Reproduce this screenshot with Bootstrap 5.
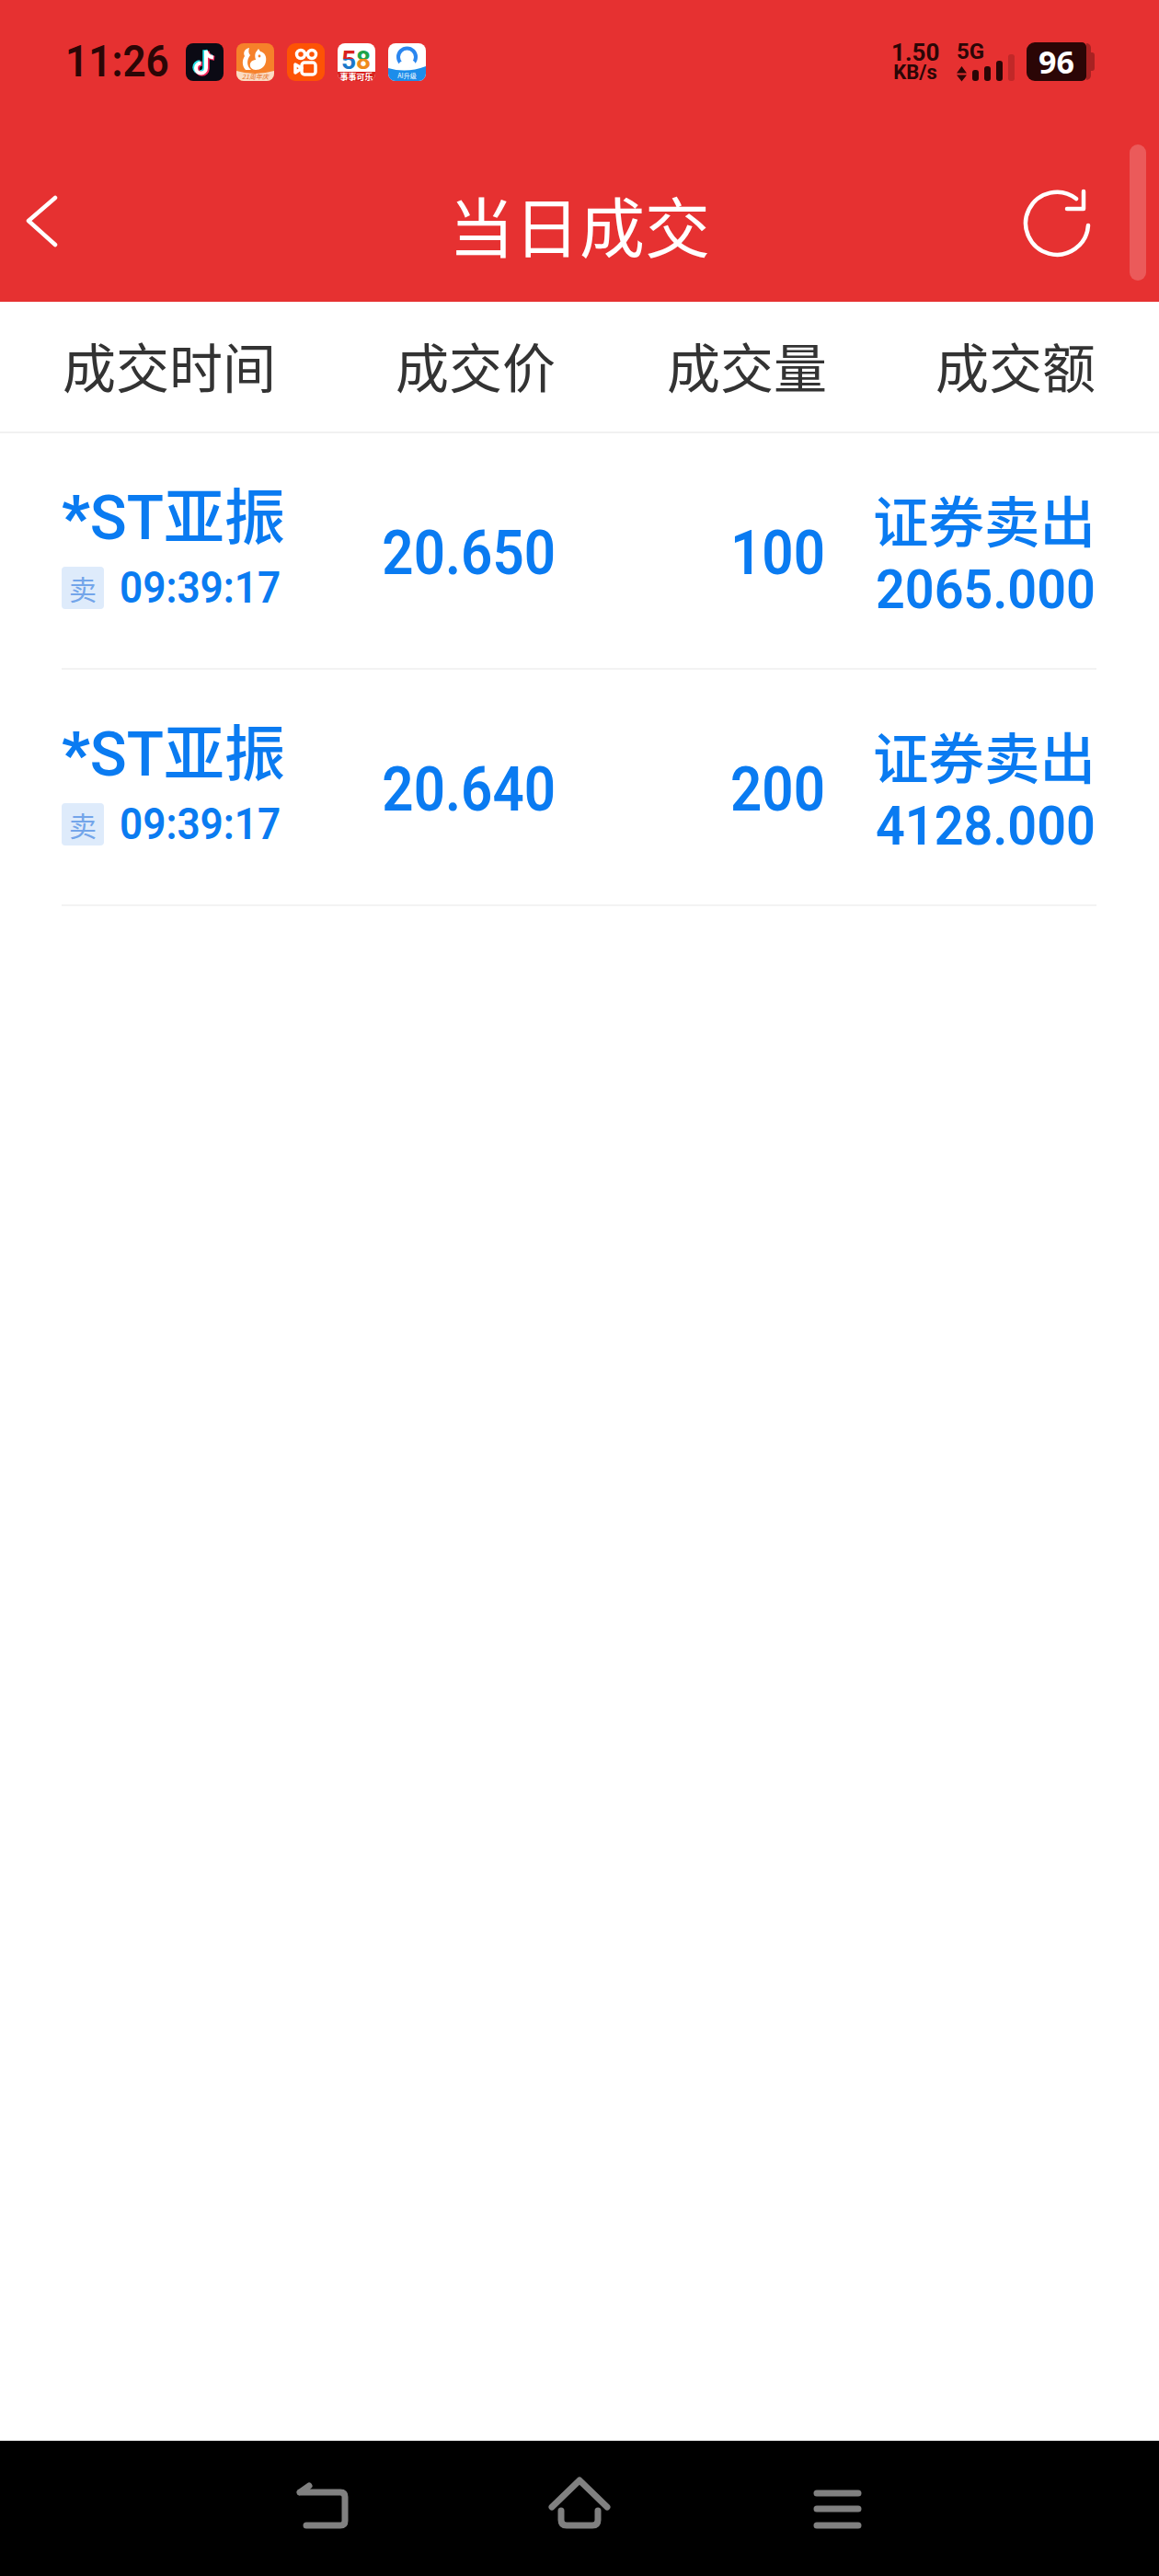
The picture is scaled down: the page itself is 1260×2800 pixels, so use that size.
<!DOCTYPE html>
<html lang="zh-CN">
<head>
    <meta charset="UTF-8">
    <meta name="viewport" content="width=device-width, initial-scale=1.0">
    <title>当日成交</title>
    <link href="https://cdn.jsdelivr.net/npm/bootstrap@5.3.0/dist/css/bootstrap.min.css" rel="stylesheet">
    <style>
        body {
            background: #fff;
            font-family: "Noto Sans CJK SC", "Noto Sans", sans-serif;
        }
        .app-page {
            min-height: 2800px;
            overflow: hidden;
        }
        .top-bar {
            height: 328px;
            background: #e63131;
            padding-top: 46px;
        }
        .status-row {
            height: 42px;
            padding: 0 70px 0 71px;
            color: #2b0606;
        }
        .clock {
            width: 131px;
            font: 600 49px/42px Roboto, sans-serif;
            transform: scaleX(.9);
            transform-origin: left center;
        }
        .app-icons {
            gap: 14px;
        }
        .net-speed {
            width: 52px;
            font-family: Roboto, sans-serif;
            font-weight: 700;
            text-align: center;
        }
        .speed-value {
            font-size: 26px;
            line-height: 24px;
        }
        .speed-unit {
            font-size: 22px;
            line-height: 20px;
        }
        .net-type {
            width: 76px;
            margin-left: 19px;
        }
        .net-type-label {
            font: 700 24px/20px Roboto, sans-serif;
        }
        .signal-icon {
            overflow: visible;
        }
        .battery {
            width: 65px;
            height: 42px;
            background: #2b0606;
            border-radius: 9px 5px 5px 9px;
            color: #fff;
            font: 700 34px/42px "Open Sans", sans-serif;
            text-align: center;
        }
        .battery-edge {
            width: 5px;
            height: 40px;
            background: #a82222;
            border-radius: 0 6px 6px 0;
        }
        .battery-nub {
            width: 4px;
            height: 20px;
            background: #a82222;
            border-radius: 0 3px 3px 0;
        }
        .title-row {
            height: 170px;
            margin-top: 70px;
            padding: 0 74px 0 29px;
            color: #fff;
        }
        .title-left {
            width: 195px;
        }
        .title-right {
            width: 150px;
        }
        .title-left svg {
            overflow: visible;
        }
        .page-title {
            font-size: 71px;
            line-height: 90px;
            font-weight: 400;
            margin: 0;
        }
        .scroll-thumb {
            position: absolute;
            left: 1228px;
            top: 157px;
            width: 18px;
            height: 148px;
            background: rgba(255, 255, 255, .2);
            border-radius: 9px;
        }
        .head-row {
            height: 143px;
            padding: 0 69px 3px 68px;
            border-bottom: 2px solid #f1f1f1;
            color: #333;
            font-size: 58px;
            line-height: 80px;
        }
        .col-name { width: 272px; }
        .col-price { width: 264px; }
        .col-qty { width: 295px; }
        .col-amount { width: 292px; }
        .deal-row {
            height: 257px;
            margin: 0 68px 0 67px;
            border-bottom: 2px solid #f3f3f3;
            color: #0a7bf1;
        }
        .deal-row .col-price { width: 265px; }
        .deal-row .col-qty { width: 293px; }
        .deal-row .col-amount { width: 294px; }
        .name-stack {
            padding-bottom: 8px;
        }
        .stock-name {
            font-family: Roboto, "Noto Sans CJK SC", sans-serif;
            font-size: 66px;
            line-height: 72px;
            font-weight: 500;
            white-space: nowrap;
        }
        .stock-star {
            font-weight: 900;
        }
        .time-line {
            margin-top: 16px;
            gap: 17px;
        }
        .side-tag {
            width: 46px;
            height: 46px;
            background: #deebfb;
            border-radius: 4px;
            color: #73a5ea;
            font-size: 30px;
            line-height: 46px;
            text-align: center;
        }
        .deal-num {
            display: block;
            font-family: Roboto, sans-serif;
            font-weight: 600;
            white-space: nowrap;
        }
        .num-time {
            font-size: 49px;
            line-height: 46px;
            transform: scaleX(.9);
            transform-origin: left center;
        }
        .num-main {
            font-size: 66px;
            line-height: 72px;
            padding-top: 6px;
            transform: scaleX(.91);
            transform-origin: right center;
        }
        .num-amount {
            font-size: 60px;
            line-height: 70px;
            transform: scaleX(.93);
            transform-origin: right center;
        }
        .amount-label {
            font-size: 60.500px;
            line-height: 84px;
            font-weight: 500;
        }
        .nav-strip {
            height: 147px;
            background: #000;
        }
    </style>
</head>
<body>
<div class="app-page d-flex flex-column position-relative">
    <!-- Red header with phone status bar -->
    <div class="top-bar">
        <div class="status-row d-flex align-items-center">
            <div class="clock">11:26</div>
            <div class="app-icons d-flex">
                <svg width="41" height="41" viewBox="0 0 41 41">
                    <rect width="41" height="41" rx="8" fill="#0b0a14"/>
                    <path d="M22 8v19a5.500 5.500 0 1 1-5.500-5.500M22 8c.6 4.500 3.400 7 8 7.500" fill="none" stroke="#25e3e8" stroke-width="5" transform="translate(-1.200 -.8)"/>
                    <path d="M22 8v19a5.500 5.500 0 1 1-5.500-5.500M22 8c.6 4.500 3.400 7 8 7.500" fill="none" stroke="#f5295e" stroke-width="5" transform="translate(1.200 .8)"/>
                    <path d="M22 8v19a5.500 5.500 0 1 1-5.500-5.500M22 8c.6 4.500 3.400 7 8 7.500" fill="none" stroke="#fff" stroke-width="4"/>
                </svg>
                <svg width="41" height="41" viewBox="0 0 41 41">
                    <defs><clipPath id="ucClip"><rect width="41" height="41" rx="8"/></clipPath></defs>
                    <g clip-path="url(#ucClip)">
                        <rect width="41" height="41" fill="#f6812a"/>
                        <path d="M0 30q20 6 41 0v11H0z" fill="#fbdcc4"/>
                    </g>
                    <path d="M14 5c-5 1-7 5-5 9-3 4-3 11 1 15h6c-5-4-5-11-1-16-2-2-2-5-1-8z" fill="#fff"/>
                    <path d="M21 10l3-4 2 3c5 1 7 6 6 11-1 6-6 9-11 9-4 0-7-3-6-7 1-3 4-4 6-4-1-3-1-6 0-8z" fill="#fff"/>
                    <circle cx="25" cy="14" r="1.400" fill="#f6812a"/>
                    <text x="20.500" y="38.500" text-anchor="middle" font-size="7" font-style="italic" fill="#e8772a" font-family="Noto Sans CJK SC">21周年庆</text>
                </svg>
                <svg width="41" height="41" viewBox="0 0 41 41">
                    <rect width="41" height="41" rx="9" fill="#fd5305"/>
                    <g fill="none" stroke="#fff" stroke-width="3.500">
                        <circle cx="15" cy="12" r="4.500"/>
                        <circle cx="27" cy="12" r="4.500"/>
                        <rect x="16" y="21" width="15" height="13" rx="3"/>
                        <path d="M16 27l-7-4v9z" stroke-linejoin="round"/>
                    </g>
                </svg>
                <svg width="41" height="41" viewBox="0 0 41 41">
                    <defs>
                        <clipPath id="fiveClip"><rect width="41" height="41" rx="8"/></clipPath>
                        <linearGradient id="fiveFill" x1="0" y1="0" x2="0" y2="1">
                            <stop offset=".45" stop-color="#d8231f"/>
                            <stop offset=".45" stop-color="#1b78c9"/>
                        </linearGradient>
                        <linearGradient id="eightFill" x1="0" y1="0" x2="0" y2="1">
                            <stop offset=".45" stop-color="#1fa34a"/>
                            <stop offset=".45" stop-color="#ef8a1d"/>
                        </linearGradient>
                    </defs>
                    <g clip-path="url(#fiveClip)">
                        <rect width="41" height="41" fill="#fff"/>
                        <rect y="31" width="41" height="10" fill="#d8231f"/>
                    </g>
                    <text x="12" y="28" text-anchor="middle" font-size="28" font-weight="700" fill="url(#fiveFill)" font-family="Roboto">5</text>
                    <text x="28" y="28" text-anchor="middle" font-size="28" font-weight="700" fill="url(#eightFill)" font-family="Roboto">8</text>
                    <text x="20.500" y="39.500" text-anchor="middle" font-size="9" font-weight="700" fill="#fff" font-family="Noto Sans CJK SC">事事可乐</text>
                </svg>
                <svg width="41" height="41" viewBox="0 0 41 41">
                    <defs><clipPath id="qqClip"><rect width="41" height="41" rx="8"/></clipPath></defs>
                    <g clip-path="url(#qqClip)">
                        <rect width="41" height="41" fill="#fff"/>
                        <path d="M0 27q20 6 41-2v16H0z" fill="#1c8dea"/>
                    </g>
                    <circle cx="20.500" cy="15" r="9.500" fill="none" stroke="#2a86ef" stroke-width="4"/>
                    <path d="M10 26q2-7 7-7 3-5 7-1 5 0 7 7-10 4-21 1z" fill="#fff"/>
                    <text x="20.500" y="38" text-anchor="middle" font-size="7" fill="#fff" font-family="Noto Sans CJK SC">AI升级</text>
                </svg>
            </div>
            <div class="net-speed ms-auto">
                <div class="speed-value">1.50</div>
                <div class="speed-unit">KB/s</div>
            </div>
            <div class="net-type">
                <div class="net-type-label">5G</div>
                <svg class="signal-icon d-block" width="70" height="22" viewBox="0 0 70 22">
                    <path d="M0 13.500l5.500-7.500 5.500 7.500zM0 15.500l5.500 7 5.500-7z" fill="#2b0606"/>
                    <rect x="17" y="10" width="7" height="12" rx="3" fill="#2b0606"/>
                    <rect x="30" y="6" width="7" height="16" rx="3" fill="#2b0606"/>
                    <rect x="43" y="0" width="7" height="22" rx="3" fill="#2b0606"/>
                    <rect x="56" y="-7" width="7" height="29" rx="3" fill="#2b0606" fill-opacity=".2"/>
                </svg>
            </div>
            <div class="battery">96</div>
            <div class="battery-edge"></div>
            <div class="battery-nub"></div>
        </div>
        <div class="title-row d-flex align-items-center justify-content-between">
            <div class="title-left">
                <svg class="d-block" width="34" height="58" viewBox="0 0 34 58">
                    <path d="M31 1L2 26l29 26" fill="none" stroke="#fff" stroke-width="4.500" stroke-linecap="round" stroke-linejoin="round"/>
                </svg>
            </div>
            <h1 class="page-title">当日成交</h1>
            <div class="title-right d-flex justify-content-end">
                <svg class="d-block" width="74" height="76" viewBox="0 0 74 76">
                    <path d="M71 40A34 34 0 1 1 58 11" fill="none" stroke="#fff" stroke-width="4.500" stroke-linecap="round"/>
                    <path d="M66 3v19H48" fill="none" stroke="#fff" stroke-width="4.500" stroke-linecap="round" stroke-linejoin="round"/>
                </svg>
            </div>
        </div>
    </div>
    <div class="scroll-thumb"></div>

    <!-- Deals table -->
    <div class="head-row d-flex align-items-center">
        <div class="col-name">成交时间</div>
        <div class="col-price text-end">成交价</div>
        <div class="col-qty text-end">成交量</div>
        <div class="col-amount text-end">成交额</div>
    </div>

    <div class="deal-row d-flex align-items-center">
        <div class="col-name name-stack">
            <div class="stock-name"><span class="stock-star">*</span>ST亚振</div>
            <div class="time-line d-flex align-items-center">
                <div class="side-tag">卖</div>
                <div class="deal-num num-time">09:39:17</div>
            </div>
        </div>
        <div class="col-price text-end deal-num num-main">20.650</div>
        <div class="col-qty text-end deal-num num-main">100</div>
        <div class="col-amount text-end">
            <div class="amount-label">证券卖出</div>
            <div class="deal-num num-amount">2065.000</div>
        </div>
    </div>

    <div class="deal-row d-flex align-items-center">
        <div class="col-name name-stack">
            <div class="stock-name"><span class="stock-star">*</span>ST亚振</div>
            <div class="time-line d-flex align-items-center">
                <div class="side-tag">卖</div>
                <div class="deal-num num-time">09:39:17</div>
            </div>
        </div>
        <div class="col-price text-end deal-num num-main">20.640</div>
        <div class="col-qty text-end deal-num num-main">200</div>
        <div class="col-amount text-end">
            <div class="amount-label">证券卖出</div>
            <div class="deal-num num-amount">4128.000</div>
        </div>
    </div>

    <div class="flex-grow-1"></div>

    <!-- Phone navigation bar -->
    <div class="nav-strip d-flex justify-content-center">
        <svg width="640" height="147" viewBox="0 0 640 147">
            <g fill="none" stroke="#808080" stroke-width="7" stroke-linecap="round" stroke-linejoin="round" transform="translate(-310 -2653)">
                <path d="M326 2709h44q5 0 5 5v26q0 5-5 5h-37M326 2709l10-7"/>
                <path d="M600 2725l30-29 30 29M610 2729v10q0 6 6 6h28q6 0 6-6v-10"/>
                <path d="M888 2710h45M888 2727h45M888 2745h45"/>
            </g>
        </svg>
    </div>
</div>
<script src="https://cdn.jsdelivr.net/npm/bootstrap@5.3.0/dist/js/bootstrap.bundle.min.js"></script>
</body>
</html>
